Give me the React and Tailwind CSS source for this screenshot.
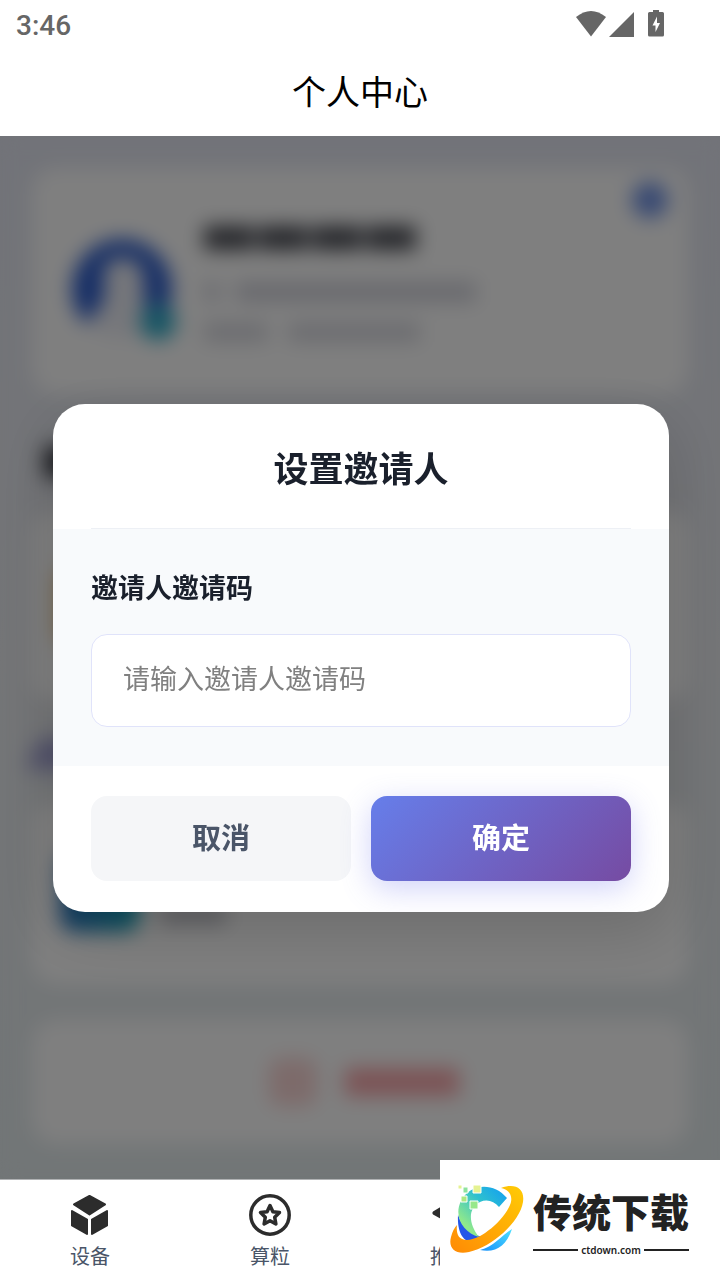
import { useState } from "react";

const CubeIcon = () => (
  <svg viewBox="0 0 42 42" className="h-[42px] w-[42px]" fill="#2c2c2c" stroke="#2c2c2c" strokeWidth="2" strokeLinejoin="round">
    <path d="M20.500 2 36 10.500 20.500 20.500 5 10.500Z" />
    <path d="M3 17 18 25.500V40L3 31.500Z" />
    <path d="M38 17 23 25.500V40L38 31.500Z" />
  </svg>
);

const StarIcon = () => (
  <svg viewBox="0 0 42 42" className="h-[42px] w-[42px]" fill="none" stroke="#2c2c2c" strokeWidth="3.500" strokeLinejoin="round">
    <circle cx="21" cy="21" r="19.200" />
    <path d="M21 11.500 23.900 17.700 30.500 18.500 25.700 23.200 26.900 30 21 26.800 15.100 30 16.300 23.200 11.500 18.500 18.100 17.700Z" />
  </svg>
);

const ShareIcon = () => (
  <svg viewBox="0 0 42 42" className="h-[42px] w-[42px]" fill="#2c2c2c">
    <path d="M4 20.500Q2.500 19 4 17.500L14 11.500V26Z" />
  </svg>
);

const UserIcon = () => (
  <svg viewBox="0 0 42 42" className="h-[42px] w-[42px]" fill="#2c2c2c">
    <circle cx="21" cy="12" r="9" />
    <path d="M4 39C4 20 38 20 38 39Z" />
  </svg>
);

const navItems = [
  { id: "device", label: "设备", Icon: CubeIcon },
  { id: "points", label: "算粒", Icon: StarIcon },
  { id: "share", label: "推广", Icon: ShareIcon },
  { id: "mine", title: "我的", Icon: UserIcon },
];

const StatusBar = () => (
  <div className="flex h-[50px] items-center justify-between pl-4 pr-14 text-[#666666]">
    <span className="pt-0.5 font-['Roboto',sans-serif] text-[28px] leading-8 font-medium">3:46</span>
    <svg viewBox="0 0 88 28" className="h-7 w-[88px] overflow-visible" fill="#666666">
      <path d="M0 6Q15-6 30 6L15 25.500Z" />
      <path d="M33 26 58 1V26Z" />
      <path d="M77-1h6v2h3.500q1.500 0 1.500 1.500V24q0 1.500-1.500 1.500h-13Q72 25.500 72 24V2.500q0-1.500 1.500-1.500H77Z" />
      <path d="M81 5.500 76.500 14.500H79.500V21L84 12H81Z" fill="#fff" />
    </svg>
  </div>
);

const ProfilePage = () => (
  <div
    aria-hidden="true"
    className="h-full overflow-hidden bg-linear-to-b from-[#e4e7f2] via-[#e8eaee] to-[#e4ecee] px-8 pt-8"
  >
    <div className="flex h-[226px] items-start rounded-3xl bg-white px-10 pt-[68px]">
      <div className="relative h-[104px] w-[100px]">
        <svg viewBox="0 0 100 104" className="h-full w-full">
          <circle cx="50" cy="52" r="50" fill="#eceef6" />
          <path d="M14 88A50 50 0 1 1 86 88L72 68V42Q70 22 50 22T32 42V64Z" fill="#2a5bcb" />
        </svg>
        <div className="absolute -right-1 bottom-0 h-9 w-9 rounded-full bg-[#2eaac8]" />
      </div>
      <div className="-mt-2.5 ml-8 flex flex-1 flex-col">
        <div className="flex h-6 gap-1">
          <div className="w-[50px] bg-[#4a4c54]" />
          <div className="w-[50px] bg-[#4a4c54]" />
          <div className="w-[50px] bg-[#4a4c54]" />
          <div className="w-[50px] bg-[#4a4c54]" />
        </div>
        <div className="mt-8 flex h-5 gap-4">
          <div className="w-4 bg-[#d6d7e0]" />
          <div className="w-60 bg-[#d2d3dc]" />
        </div>
        <div className="mt-5 flex h-5 gap-5">
          <div className="w-16 bg-[#d8d9e0]" />
          <div className="w-[132px] bg-[#d8d9e0]" />
        </div>
      </div>
      <div className="-mt-[54px] -mr-5 h-9 w-9 rounded-full bg-[#6f92e6]" />
    </div>
    <div className="mt-13 ml-3 h-8 w-40 bg-[#3a3c44]" />
    <div className="mt-8 flex h-48 items-center rounded-3xl bg-white px-6">
      <div className="h-20 w-20 rounded-2xl bg-[#f2c98a]" />
    </div>
    <div className="mt-9 h-8 w-40 -skew-x-24 rounded-md bg-[#a3a3d4]" />
    <div className="mt-8 flex h-[182px] rounded-3xl bg-white px-7 pt-[50px]">
      <div className="h-20 w-20 rounded-2xl bg-linear-to-r from-[#2b76c4] to-[#18a8bc]" />
      <div className="mt-13 ml-5 h-5 w-[66px] bg-[#c0c1c8]" />
    </div>
    <div className="mt-9 flex h-[124px] items-center justify-center gap-7 rounded-3xl bg-white pl-2">
      <div className="h-12 w-12 rounded-xl bg-[#fbd6d5]" />
      <div className="h-7 w-[114px] bg-[#f8a6aa]" />
    </div>
  </div>
);

const InviterDialog = () => {
  const [code, setCode] = useState("");

  return (
    <div
      role="dialog"
      aria-labelledby="inviter-title"
      className="w-full overflow-hidden rounded-[32px] bg-white shadow-[0_20px_60px_rgba(0,0,0,0.15)]"
    >
      <div className="px-[38px]">
        <h2
          id="inviter-title"
          className="border-b border-[#edf0f5] pt-[39px] pb-[37px] text-center text-[35px] leading-12 font-semibold text-[#1a202c]"
        >
          设置邀请人
        </h2>
      </div>
      <div className="bg-[#f8fafc] px-[38px] pt-[38px] pb-[39px]">
        <label htmlFor="inviter-code" className="block text-[27px] leading-10 font-semibold text-[#1a202c]">
          邀请人邀请码
        </label>
        <input
          id="inviter-code"
          type="text"
          value={code}
          onChange={(e) => setCode(e.target.value)}
          placeholder="请输入邀请人邀请码"
          className="mt-[27px] block h-[93px] w-full rounded-2xl border border-[#e0e3fa] bg-white px-[31px] pb-1.5 text-[27px] placeholder:text-[#808080]"
        />
      </div>
      <div className="flex gap-5 px-[38px] pt-[30px] pb-[31px]">
        <button
          type="button"
          className="h-[85px] flex-1 rounded-2xl bg-[#f5f6f8] pb-1 text-[29px] font-semibold text-[#4a5568]"
        >
          取消
        </button>
        <button
          type="button"
          className="h-[85px] flex-1 rounded-2xl bg-[linear-gradient(135deg,#667eea,#764ba2)] pb-1 text-[29px] font-semibold text-white shadow-[0_8px_30px_rgba(102,110,234,0.3)]"
        >
          确定
        </button>
      </div>
    </div>
  );
};

const CtdownLogo = () => (
  <svg viewBox="0 0 76 72" className="h-[72px] w-[76px]">
    <defs>
      <linearGradient id="arc" x1="0" y1="1" x2="1" y2="0">
        <stop offset="0.2" stopColor="#8fe88c" />
        <stop offset="0.6" stopColor="#2dc0cf" />
        <stop offset="1" stopColor="#119cf5" />
      </linearGradient>
      <linearGradient id="ring" x1="0" y1="1" x2="1" y2="0">
        <stop offset="0" stopColor="#ff8a05" />
        <stop offset="1" stopColor="#ffcb05" />
      </linearGradient>
      <linearGradient id="tail" x1="0" y1="1" x2="1" y2="0">
        <stop offset="0" stopColor="#1690fa" />
        <stop offset="1" stopColor="#4ee0ff" />
      </linearGradient>
    </defs>
    <path d="M9 31C8 49 15 58 22 57L33 53C21 49 13 43 9 31Z" fill="#2456e8" />
    <path d="M58 14C44-3 20 0 12 17C4 33 15 49 30 53C19 39 19 24 31 18C38 15 45 17 50 23Z" fill="url(#arc)" />
    <path d="M63 45C57 63 46 69 31 66C44 63 52 52 63 45Z" fill="url(#tail)" />
    <path
      d="M52 4C66-1 76 4 74 18C71 38 43 63 20 68C6 71-1 64 2 53Q4 45 8 41C7 49 9 56 18 56C32 56 55 36 61 21C65 11 59 5 52 4Z"
      fill="url(#ring)"
    />
    <g stroke="#fff" strokeWidth="1">
      <path d="M24 1h8v8h-8Z" fill="#e5f291" />
      <path d="M14 3h5v6h-5Z" fill="#8fe39c" />
      <path d="M12 12h6v6h-6Z" fill="#ace882" />
      <path d="M21 17h8v8h-8Z" fill="#98e88b" />
      <path d="M9 1h4v4H9Z" fill="#e5f291" />
    </g>
  </svg>
);

const Watermark = () => (
  <div className="absolute right-0 bottom-0 z-20 flex h-[120px] w-[280px] items-center gap-2 bg-white pl-[9px]">
    <CtdownLogo />
    <div className="w-[156px] text-[#222222]">
      <div className="pt-1 text-[39px] leading-12 font-black whitespace-nowrap">传统下载</div>
      <div className="mt-2 flex items-center gap-[3px] font-['Noto_Sans',sans-serif] text-[10px] leading-4 font-semibold">
        <span className="h-0.5 flex-1 bg-[#222222]" />
        ctdown.com
        <span className="h-0.5 flex-1 bg-[#222222]" />
      </div>
    </div>
  </div>
);

const App = () => {
  return (
    <div className="relative flex h-screen flex-col overflow-hidden bg-white font-['Noto_Sans_CJK_SC',sans-serif]">
      <header className="shrink-0">
        <StatusBar />
        <h1 className="pt-4 pb-5 text-center text-[34px] leading-[50px] text-black">个人中心</h1>
      </header>

      <main className="relative min-h-0 flex-1">
        <ProfilePage />
        <div className="absolute inset-0 flex items-center justify-center bg-black/50 pt-px pr-[51px] pl-[53px] backdrop-blur-[10px]">
          <InviterDialog />
        </div>
      </main>

      <nav className="flex h-[101px] shrink-0 border-t border-[#b0b2b4]">
        {navItems.map(({ id, label, title, Icon }) => (
          <button key={id} type="button" aria-label={title} className="flex flex-1 flex-col items-center pt-3.5">
            <Icon />
            {label && <span className="mt-1 text-[20px] leading-8 text-[#4a5568]">{label}</span>}
          </button>
        ))}
      </nav>

      <Watermark />
    </div>
  );
};

export default App;
